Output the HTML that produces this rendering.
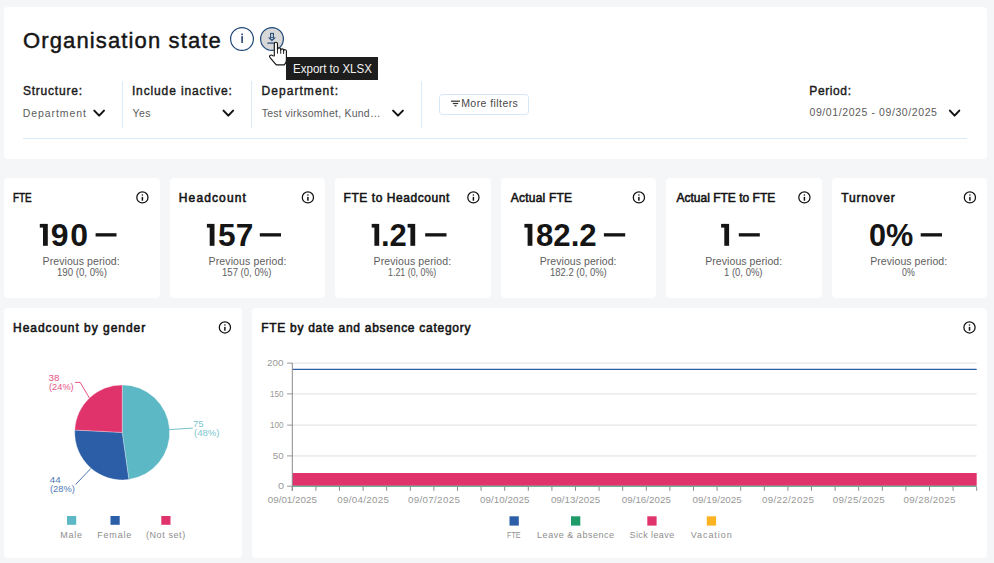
<!DOCTYPE html>
<html><head><meta charset="utf-8"><style>
*{margin:0;padding:0;box-sizing:border-box}
html,body{width:994px;height:563px;overflow:hidden;background:#f5f6f8;font-family:"Liberation Sans",sans-serif}
.card{position:absolute;background:#fff}
.t{position:absolute;white-space:nowrap}
svg{position:absolute;left:0;top:0}
</style></head><body>
<div class="card" style="left:4px;top:7px;width:983px;height:152px;border-radius:4px"></div><div class="card" style="left:4.0px;top:178px;width:155.5px;height:120px;border-radius:4px"></div><div class="card" style="left:169.5px;top:178px;width:155.5px;height:120px;border-radius:4px"></div><div class="card" style="left:335.0px;top:178px;width:155.5px;height:120px;border-radius:4px"></div><div class="card" style="left:500.5px;top:178px;width:155.5px;height:120px;border-radius:4px"></div><div class="card" style="left:666.0px;top:178px;width:155.5px;height:120px;border-radius:4px"></div><div class="card" style="left:831.5px;top:178px;width:155.5px;height:120px;border-radius:4px"></div><div class="card" style="left:4px;top:308px;width:238px;height:249.5px;border-radius:4px"></div><div class="card" style="left:252px;top:308px;width:735px;height:249.5px;border-radius:4px"></div>
<svg width="994" height="563" viewBox="0 0 994 563">
<line x1="122.5" y1="81" x2="122.5" y2="128" stroke="#d9eaf8" stroke-width="1"/><line x1="251.5" y1="81" x2="251.5" y2="128" stroke="#d9eaf8" stroke-width="1"/><line x1="421.5" y1="81" x2="421.5" y2="128" stroke="#d9eaf8" stroke-width="1"/><line x1="23" y1="138.5" x2="967" y2="138.5" stroke="#d9eaf8" stroke-width="1"/><polyline points="94.3,110.6 99.15,115.6 104,110.6" fill="none" stroke="#121212" stroke-width="2" stroke-linecap="round" stroke-linejoin="round"/><polyline points="223.5,110.6 228.3,115.6 233.1,110.6" fill="none" stroke="#121212" stroke-width="2" stroke-linecap="round" stroke-linejoin="round"/><polyline points="393.1,110.6 398.0,115.6 402.9,110.6" fill="none" stroke="#121212" stroke-width="2" stroke-linecap="round" stroke-linejoin="round"/><polyline points="949.9,110.6 954.5999999999999,115.6 959.3,110.6" fill="none" stroke="#121212" stroke-width="2" stroke-linecap="round" stroke-linejoin="round"/><rect x="439.5" y="94.5" width="89" height="20" rx="3" fill="#fff" stroke="#d5e7f6" stroke-width="1"/><rect x="451" y="100.6" width="9" height="1.2" fill="#333"/><rect x="452.8" y="102.9" width="5.4" height="1.2" fill="#333"/><rect x="454.5" y="105.2" width="2" height="1.2" fill="#333"/><circle cx="242" cy="39" r="11.4" fill="#fff" stroke="#1f4878" stroke-width="1.2"/><rect x="241.35" y="36.1" width="1.5" height="6.9" fill="#1a3a66"/><rect x="241.35" y="33.5" width="1.5" height="1.7" fill="#1a3a66"/><circle cx="272" cy="39" r="11.4" fill="#d8d8d8" stroke="#1f4878" stroke-width="1.2"/><rect x="270.6" y="33.4" width="2.8" height="4.6" fill="none" stroke="#1f4878" stroke-width="1.05"/><path d="M267.9 37.5 H276 L271.95 41.2 Z" fill="#1f4878"/><path d="M270.3 38.1 H273.7 L272 39.6 Z" fill="#d8d8d8"/><rect x="267.4" y="42.5" width="8" height="1.2" fill="#1f4878"/><rect x="286" y="57" width="92" height="23" fill="#1d1d1d"/><path d="M274.3,56 V43.9 a1.6,1.6 0 0 1 3.2,0 V49.4 a1.6,1.6 0 0 1 3.2,0.1 V50.2 a1.45,1.45 0 0 1 2.9,0.1 V51 a1.4,1.4 0 0 1 2.8,0.2 V60.3 q0,2.6 -2.1,4.6 H276.6 q-1.1,-0.6 -2.3,-2.2 l-4.4,-5.4 q-0.9,-1.4 0.5,-2.1 q1.3,-0.5 2.3,0.5 z" fill="#fff" stroke="#161616" stroke-width="1.15" stroke-linejoin="round"/><line x1="277.5" y1="49.4" x2="277.5" y2="53.6" stroke="#161616" stroke-width="0.9"/><line x1="280.7" y1="50.2" x2="280.7" y2="53.8" stroke="#161616" stroke-width="0.9"/><line x1="283.6" y1="51" x2="283.6" y2="54" stroke="#161616" stroke-width="0.9"/><circle cx="142.4" cy="197.4" r="5.6" fill="none" stroke="#111" stroke-width="1.25"/><rect x="141.65" y="196.9" width="1.5" height="3.8" fill="#111"/><circle cx="142.4" cy="195.05" r="0.8" fill="#111"/><rect x="95.6" y="233.2" width="20.900000000000006" height="3.3" fill="#151515"/><circle cx="307.9" cy="197.4" r="5.6" fill="none" stroke="#111" stroke-width="1.25"/><rect x="307.15" y="196.9" width="1.5" height="3.8" fill="#111"/><circle cx="307.9" cy="195.05" r="0.8" fill="#111"/><rect x="259.8" y="233.2" width="21.19999999999999" height="3.3" fill="#151515"/><circle cx="473.4" cy="197.4" r="5.6" fill="none" stroke="#111" stroke-width="1.25"/><rect x="472.65" y="196.9" width="1.5" height="3.8" fill="#111"/><circle cx="473.4" cy="195.05" r="0.8" fill="#111"/><rect x="425.2" y="233.2" width="21.30000000000001" height="3.3" fill="#151515"/><circle cx="638.9" cy="197.4" r="5.6" fill="none" stroke="#111" stroke-width="1.25"/><rect x="638.15" y="196.9" width="1.5" height="3.8" fill="#111"/><circle cx="638.9" cy="195.05" r="0.8" fill="#111"/><rect x="603.9" y="233.2" width="21.300000000000068" height="3.3" fill="#151515"/><circle cx="804.4" cy="197.4" r="5.6" fill="none" stroke="#111" stroke-width="1.25"/><rect x="803.65" y="196.9" width="1.5" height="3.8" fill="#111"/><circle cx="804.4" cy="195.05" r="0.8" fill="#111"/><rect x="738.8" y="233.2" width="21.0" height="3.3" fill="#151515"/><circle cx="969.9" cy="197.4" r="5.6" fill="none" stroke="#111" stroke-width="1.25"/><rect x="969.15" y="196.9" width="1.5" height="3.8" fill="#111"/><circle cx="969.9" cy="195.05" r="0.8" fill="#111"/><rect x="920.7" y="233.2" width="21.299999999999955" height="3.3" fill="#151515"/><rect x="39.8" y="223.9" width="4.200000000000003" height="3.7" fill="#151515"/><rect x="43.0" y="223.9" width="4.8" height="21.9" fill="#151515"/><rect x="206.9" y="223.9" width="3.799999999999983" height="3.7" fill="#151515"/><rect x="209.7" y="223.9" width="4.8" height="21.9" fill="#151515"/><rect x="371.7" y="223.9" width="3.6999999999999886" height="3.7" fill="#151515"/><rect x="374.4" y="223.9" width="4.8" height="21.9" fill="#151515"/><rect x="407.6" y="223.9" width="3.7999999999999545" height="3.7" fill="#151515"/><rect x="410.4" y="223.9" width="4.8" height="21.9" fill="#151515"/><rect x="524.4" y="223.9" width="4.2000000000000455" height="3.7" fill="#151515"/><rect x="527.6" y="223.9" width="4.8" height="21.9" fill="#151515"/><rect x="721.1" y="223.9" width="4.199999999999932" height="3.7" fill="#151515"/><rect x="724.3" y="223.9" width="4.8" height="21.9" fill="#151515"/><circle cx="224.9" cy="327.4" r="5.6" fill="none" stroke="#111" stroke-width="1.25"/><rect x="224.15" y="326.9" width="1.5" height="3.8" fill="#111"/><circle cx="224.9" cy="325.04999999999995" r="0.8" fill="#111"/><circle cx="969.5" cy="327.4" r="5.6" fill="none" stroke="#111" stroke-width="1.25"/><rect x="968.75" y="326.9" width="1.5" height="3.8" fill="#111"/><circle cx="969.5" cy="325.04999999999995" r="0.8" fill="#111"/><path d="M122.2,432.4 L122.20,384.90 A47.5,47.5 0 0 1 128.83,479.43 Z" fill="#5bb8c4" stroke="#fff" stroke-width="0.3" stroke-linejoin="round"/><path d="M122.2,432.4 L128.83,479.43 A47.5,47.5 0 0 1 74.76,430.02 Z" fill="#2b5ea6" stroke="#fff" stroke-width="0.3" stroke-linejoin="round"/><path d="M122.2,432.4 L74.76,430.02 A47.5,47.5 0 0 1 122.20,384.90 Z" fill="#e0336c" stroke="#fff" stroke-width="0.3" stroke-linejoin="round"/><polyline points="75.1,382.4 80.2,382.4 89.3,397.9" fill="none" stroke="#e0336c" stroke-width="0.85"/><polyline points="169.5,429.6 192.8,428.1" fill="none" stroke="#5bb8c4" stroke-width="0.85"/><polyline points="90.9,468.4 75.6,484.5" fill="none" stroke="#2b5ea6" stroke-width="0.85"/><rect x="67" y="516" width="9.2" height="8.8" fill="#5bb8c4"/><rect x="110.5" y="516" width="9.2" height="8.8" fill="#2b5ea6"/><rect x="161.3" y="516" width="9.2" height="8.8" fill="#e0336c"/><line x1="292.3" y1="363.1" x2="976.7" y2="363.1" stroke="#e6e6e6" stroke-width="1.3"/><line x1="287.1" y1="363.1" x2="292.3" y2="363.1" stroke="#999" stroke-width="1"/><line x1="292.3" y1="393.9" x2="976.7" y2="393.9" stroke="#e6e6e6" stroke-width="1.3"/><line x1="287.1" y1="393.9" x2="292.3" y2="393.9" stroke="#999" stroke-width="1"/><line x1="292.3" y1="425.1" x2="976.7" y2="425.1" stroke="#e6e6e6" stroke-width="1.3"/><line x1="287.1" y1="425.1" x2="292.3" y2="425.1" stroke="#999" stroke-width="1"/><line x1="292.3" y1="455.9" x2="976.7" y2="455.9" stroke="#e6e6e6" stroke-width="1.3"/><line x1="287.1" y1="455.9" x2="292.3" y2="455.9" stroke="#999" stroke-width="1"/><line x1="287.1" y1="486.2" x2="292.3" y2="486.2" stroke="#999" stroke-width="1"/><rect x="292.3" y="473" width="684.4000000000001" height="12.8" fill="#e0336c"/><line x1="292.3" y1="486.2" x2="976.7" y2="486.2" stroke="#3d9a78" stroke-width="1.1"/><line x1="292.3" y1="369.4" x2="976.7" y2="369.4" stroke="#2f5fa6" stroke-width="1.3"/><line x1="292.3" y1="363" x2="292.3" y2="491" stroke="#8a8a8a" stroke-width="1"/><line x1="292.30" y1="486.8" x2="292.30" y2="490.8" stroke="#8a8a8a" stroke-width="1"/><line x1="315.90" y1="486.8" x2="315.90" y2="490.8" stroke="#8a8a8a" stroke-width="1"/><line x1="339.50" y1="486.8" x2="339.50" y2="490.8" stroke="#8a8a8a" stroke-width="1"/><line x1="363.10" y1="486.8" x2="363.10" y2="490.8" stroke="#8a8a8a" stroke-width="1"/><line x1="386.70" y1="486.8" x2="386.70" y2="490.8" stroke="#8a8a8a" stroke-width="1"/><line x1="410.30" y1="486.8" x2="410.30" y2="490.8" stroke="#8a8a8a" stroke-width="1"/><line x1="433.90" y1="486.8" x2="433.90" y2="490.8" stroke="#8a8a8a" stroke-width="1"/><line x1="457.50" y1="486.8" x2="457.50" y2="490.8" stroke="#8a8a8a" stroke-width="1"/><line x1="481.10" y1="486.8" x2="481.10" y2="490.8" stroke="#8a8a8a" stroke-width="1"/><line x1="504.70" y1="486.8" x2="504.70" y2="490.8" stroke="#8a8a8a" stroke-width="1"/><line x1="528.30" y1="486.8" x2="528.30" y2="490.8" stroke="#8a8a8a" stroke-width="1"/><line x1="551.90" y1="486.8" x2="551.90" y2="490.8" stroke="#8a8a8a" stroke-width="1"/><line x1="575.50" y1="486.8" x2="575.50" y2="490.8" stroke="#8a8a8a" stroke-width="1"/><line x1="599.10" y1="486.8" x2="599.10" y2="490.8" stroke="#8a8a8a" stroke-width="1"/><line x1="622.70" y1="486.8" x2="622.70" y2="490.8" stroke="#8a8a8a" stroke-width="1"/><line x1="646.30" y1="486.8" x2="646.30" y2="490.8" stroke="#8a8a8a" stroke-width="1"/><line x1="669.90" y1="486.8" x2="669.90" y2="490.8" stroke="#8a8a8a" stroke-width="1"/><line x1="693.50" y1="486.8" x2="693.50" y2="490.8" stroke="#8a8a8a" stroke-width="1"/><line x1="717.10" y1="486.8" x2="717.10" y2="490.8" stroke="#8a8a8a" stroke-width="1"/><line x1="740.70" y1="486.8" x2="740.70" y2="490.8" stroke="#8a8a8a" stroke-width="1"/><line x1="764.30" y1="486.8" x2="764.30" y2="490.8" stroke="#8a8a8a" stroke-width="1"/><line x1="787.90" y1="486.8" x2="787.90" y2="490.8" stroke="#8a8a8a" stroke-width="1"/><line x1="811.50" y1="486.8" x2="811.50" y2="490.8" stroke="#8a8a8a" stroke-width="1"/><line x1="835.10" y1="486.8" x2="835.10" y2="490.8" stroke="#8a8a8a" stroke-width="1"/><line x1="858.70" y1="486.8" x2="858.70" y2="490.8" stroke="#8a8a8a" stroke-width="1"/><line x1="882.30" y1="486.8" x2="882.30" y2="490.8" stroke="#8a8a8a" stroke-width="1"/><line x1="905.90" y1="486.8" x2="905.90" y2="490.8" stroke="#8a8a8a" stroke-width="1"/><line x1="929.50" y1="486.8" x2="929.50" y2="490.8" stroke="#8a8a8a" stroke-width="1"/><line x1="953.10" y1="486.8" x2="953.10" y2="490.8" stroke="#8a8a8a" stroke-width="1"/><line x1="976.70" y1="486.8" x2="976.70" y2="490.8" stroke="#8a8a8a" stroke-width="1"/><rect x="509.5" y="516.3" width="9.3" height="9.3" fill="#2b5ea6"/><rect x="571" y="516.3" width="9.3" height="9.3" fill="#1f9a68"/><rect x="647.3" y="516.3" width="9.3" height="9.3" fill="#e0336c"/><rect x="706.8" y="516.3" width="9.3" height="9.3" fill="#fbb321"/>
</svg>
<div class="t" style="left:22.93px;top:30.04px;font-size:22px;line-height:22px;font-weight:400;color:#151515;letter-spacing:1.139px;-webkit-text-stroke:0.45px #151515;">Organisation state</div><div class="t" style="left:22.89px;top:85.21px;font-size:12px;line-height:12px;font-weight:400;color:#1a1a1a;letter-spacing:0.796px;-webkit-text-stroke:0.4px #1a1a1a;">Structure:</div><div class="t" style="left:131.89px;top:85.21px;font-size:12px;line-height:12px;font-weight:400;color:#1a1a1a;letter-spacing:0.873px;-webkit-text-stroke:0.4px #1a1a1a;">Include inactive:</div><div class="t" style="left:261.47px;top:85.21px;font-size:12px;line-height:12px;font-weight:400;color:#1a1a1a;letter-spacing:1.058px;-webkit-text-stroke:0.4px #1a1a1a;">Department:</div><div class="t" style="left:809.27px;top:85.21px;font-size:12px;line-height:12px;font-weight:400;color:#1a1a1a;letter-spacing:0.614px;-webkit-text-stroke:0.4px #1a1a1a;">Period:</div><div class="t" style="left:22.69px;top:108.27px;font-size:10.5px;line-height:10.5px;font-weight:400;color:#5c5c5c;letter-spacing:0.926px;">Department</div><div class="t" style="left:132.43px;top:108.27px;font-size:10.5px;line-height:10.5px;font-weight:400;color:#5c5c5c;letter-spacing:0.489px;">Yes</div><div class="t" style="left:261.74px;top:108.27px;font-size:10.5px;line-height:10.5px;font-weight:400;color:#5c5c5c;letter-spacing:0.231px;">Test virksomhet, Kund…</div><div class="t" style="left:809.49px;top:107.17px;font-size:10.5px;line-height:10.5px;font-weight:400;color:#5c5c5c;letter-spacing:0.590px;">09/01/2025 - 09/30/2025</div><div class="t" style="left:461.19px;top:98.27px;font-size:10.5px;line-height:10.5px;font-weight:400;color:#484848;letter-spacing:0.429px;">More filters</div><div class="t" style="left:292.65px;top:62.91px;font-size:12px;line-height:12px;font-weight:400;color:#f2f2f2;letter-spacing:0.000px;transform:scaleX(0.9614);transform-origin:0 0;">Export to XLSX</div><div class="t" style="left:13.44px;top:192.21px;font-size:12px;line-height:12px;font-weight:400;color:#141414;letter-spacing:0.000px;transform:scaleX(0.8239);transform-origin:0 0;-webkit-text-stroke:0.55px #141414;">FTE</div><div class="t" style="left:178.83px;top:192.21px;font-size:12px;line-height:12px;font-weight:400;color:#141414;letter-spacing:1.119px;-webkit-text-stroke:0.55px #141414;">Headcount</div><div class="t" style="left:343.53px;top:192.21px;font-size:12px;line-height:12px;font-weight:400;color:#141414;letter-spacing:0.557px;-webkit-text-stroke:0.55px #141414;">FTE to Headcount</div><div class="t" style="left:510.87px;top:192.21px;font-size:12px;line-height:12px;font-weight:400;color:#141414;letter-spacing:0.201px;-webkit-text-stroke:0.55px #141414;">Actual FTE</div><div class="t" style="left:676.47px;top:192.21px;font-size:12px;line-height:12px;font-weight:400;color:#141414;letter-spacing:0.005px;-webkit-text-stroke:0.55px #141414;">Actual FTE to FTE</div><div class="t" style="left:841.18px;top:192.21px;font-size:12px;line-height:12px;font-weight:400;color:#141414;letter-spacing:0.860px;-webkit-text-stroke:0.55px #141414;">Turnover</div><div class="t" style="left:50.78px;top:219.00px;font-size:32px;line-height:32px;font-weight:700;color:#151515;letter-spacing:1.598px;">90</div><div class="t" style="left:217.65px;top:219.00px;font-size:32px;line-height:32px;font-weight:700;color:#151515;letter-spacing:0.000px;transform:scaleX(0.9905);transform-origin:0 0;">57</div><div class="t" style="left:381.03px;top:219.00px;font-size:32px;line-height:32px;font-weight:700;color:#151515;letter-spacing:0.000px;transform:scaleX(0.9674);transform-origin:0 0;">.2</div><div class="t" style="left:535.61px;top:219.00px;font-size:32px;line-height:32px;font-weight:700;color:#151515;letter-spacing:0.000px;transform:scaleX(0.9740);transform-origin:0 0;">82.2</div><div class="t" style="left:868.83px;top:219.00px;font-size:32px;line-height:32px;font-weight:700;color:#151515;letter-spacing:0.000px;transform:scaleX(0.9570);transform-origin:0 0;">0%</div><div class="t" style="left:42.59px;top:256.47px;font-size:10.5px;line-height:10.5px;font-weight:400;color:#5e5e5e;letter-spacing:0.084px;">Previous period:</div><div class="t" style="left:208.59px;top:256.47px;font-size:10.5px;line-height:10.5px;font-weight:400;color:#5e5e5e;letter-spacing:0.124px;">Previous period:</div><div class="t" style="left:373.59px;top:256.47px;font-size:10.5px;line-height:10.5px;font-weight:400;color:#5e5e5e;letter-spacing:0.111px;">Previous period:</div><div class="t" style="left:539.69px;top:256.47px;font-size:10.5px;line-height:10.5px;font-weight:400;color:#5e5e5e;letter-spacing:0.064px;">Previous period:</div><div class="t" style="left:705.19px;top:256.47px;font-size:10.5px;line-height:10.5px;font-weight:400;color:#5e5e5e;letter-spacing:0.071px;">Previous period:</div><div class="t" style="left:870.19px;top:256.47px;font-size:10.5px;line-height:10.5px;font-weight:400;color:#5e5e5e;letter-spacing:0.071px;">Previous period:</div><div class="t" style="left:56.53px;top:267.07px;font-size:10.5px;line-height:10.5px;font-weight:400;color:#5e5e5e;letter-spacing:0.000px;transform:scaleX(0.9194);transform-origin:0 0;">190 (0, 0%)</div><div class="t" style="left:222.34px;top:267.07px;font-size:10.5px;line-height:10.5px;font-weight:400;color:#5e5e5e;letter-spacing:0.000px;transform:scaleX(0.9100);transform-origin:0 0;">157 (0, 0%)</div><div class="t" style="left:387.60px;top:267.07px;font-size:10.5px;line-height:10.5px;font-weight:400;color:#5e5e5e;letter-spacing:0.000px;transform:scaleX(0.8431);transform-origin:0 0;">1.21 (0, 0%)</div><div class="t" style="left:549.55px;top:267.07px;font-size:10.5px;line-height:10.5px;font-weight:400;color:#5e5e5e;letter-spacing:0.000px;transform:scaleX(0.9001);transform-origin:0 0;">182.2 (0, 0%)</div><div class="t" style="left:723.84px;top:267.07px;font-size:10.5px;line-height:10.5px;font-weight:400;color:#5e5e5e;letter-spacing:0.000px;transform:scaleX(0.9045);transform-origin:0 0;">1 (0, 0%)</div><div class="t" style="left:902.47px;top:267.07px;font-size:10.5px;line-height:10.5px;font-weight:400;color:#5e5e5e;letter-spacing:0.000px;transform:scaleX(0.8446);transform-origin:0 0;">0%</div><div class="t" style="left:13.03px;top:322.21px;font-size:12px;line-height:12px;font-weight:400;color:#141414;letter-spacing:0.968px;-webkit-text-stroke:0.55px #141414;">Headcount by gender</div><div class="t" style="left:261.13px;top:322.21px;font-size:12px;line-height:12px;font-weight:400;color:#141414;letter-spacing:0.727px;-webkit-text-stroke:0.55px #141414;">FTE by date and absence category</div><div class="t" style="left:267.00px;top:358.33px;font-size:9.8px;line-height:9.8px;font-weight:400;color:#999999;letter-spacing:0.062px;">200</div><div class="t" style="left:269.94px;top:389.13px;font-size:9.8px;line-height:9.8px;font-weight:400;color:#999999;letter-spacing:0.000px;transform:scaleX(0.8261);transform-origin:0 0;">150</div><div class="t" style="left:269.94px;top:420.33px;font-size:9.8px;line-height:9.8px;font-weight:400;color:#999999;letter-spacing:0.000px;transform:scaleX(0.8261);transform-origin:0 0;">100</div><div class="t" style="left:272.64px;top:451.13px;font-size:9.8px;line-height:9.8px;font-weight:400;color:#999999;letter-spacing:0.145px;">50</div><div class="t" style="left:277.53px;top:481.43px;font-size:9.8px;line-height:9.8px;font-weight:400;color:#999999;letter-spacing:0.000px;transform:scaleX(1.1143);transform-origin:0 0;">0</div><div class="t" style="left:267.69px;top:495.03px;font-size:9.8px;line-height:9.8px;font-weight:400;color:#999999;letter-spacing:0.026px;">09/01/2025</div><div class="t" style="left:337.19px;top:495.03px;font-size:9.8px;line-height:9.8px;font-weight:400;color:#999999;letter-spacing:0.315px;">09/04/2025</div><div class="t" style="left:407.99px;top:495.03px;font-size:9.8px;line-height:9.8px;font-weight:400;color:#999999;letter-spacing:0.315px;">09/07/2025</div><div class="t" style="left:480.09px;top:495.03px;font-size:9.8px;line-height:9.8px;font-weight:400;color:#999999;letter-spacing:0.026px;">09/10/2025</div><div class="t" style="left:550.89px;top:495.03px;font-size:9.8px;line-height:9.8px;font-weight:400;color:#999999;letter-spacing:0.026px;">09/13/2025</div><div class="t" style="left:621.69px;top:495.03px;font-size:9.8px;line-height:9.8px;font-weight:400;color:#999999;letter-spacing:0.026px;">09/16/2025</div><div class="t" style="left:692.49px;top:495.03px;font-size:9.8px;line-height:9.8px;font-weight:400;color:#999999;letter-spacing:0.026px;">09/19/2025</div><div class="t" style="left:761.99px;top:495.03px;font-size:9.8px;line-height:9.8px;font-weight:400;color:#999999;letter-spacing:0.315px;">09/22/2025</div><div class="t" style="left:832.79px;top:495.03px;font-size:9.8px;line-height:9.8px;font-weight:400;color:#999999;letter-spacing:0.315px;">09/25/2025</div><div class="t" style="left:903.59px;top:495.03px;font-size:9.8px;line-height:9.8px;font-weight:400;color:#999999;letter-spacing:0.315px;">09/28/2025</div><div class="t" style="left:48.49px;top:373.13px;font-size:9.8px;line-height:9.8px;font-weight:400;color:#e55587;letter-spacing:0.145px;">38</div><div class="t" style="left:48.97px;top:382.03px;font-size:9.8px;line-height:9.8px;font-weight:400;color:#e55587;letter-spacing:0.000px;transform:scaleX(0.9447);transform-origin:0 0;">(24%)</div><div class="t" style="left:193.36px;top:418.93px;font-size:9.8px;line-height:9.8px;font-weight:400;color:#7cc6cf;letter-spacing:0.000px;transform:scaleX(0.9780);transform-origin:0 0;">75</div><div class="t" style="left:193.65px;top:427.93px;font-size:9.8px;line-height:9.8px;font-weight:400;color:#7cc6cf;letter-spacing:0.000px;transform:scaleX(0.9730);transform-origin:0 0;">(48%)</div><div class="t" style="left:49.80px;top:474.93px;font-size:9.8px;line-height:9.8px;font-weight:400;color:#5078b5;letter-spacing:0.018px;">44</div><div class="t" style="left:49.77px;top:483.93px;font-size:9.8px;line-height:9.8px;font-weight:400;color:#5078b5;letter-spacing:0.000px;transform:scaleX(0.9488);transform-origin:0 0;">(28%)</div><div class="t" style="left:60.17px;top:531.34px;font-size:9px;line-height:9px;font-weight:400;color:#8e8e8e;letter-spacing:0.788px;">Male</div><div class="t" style="left:97.27px;top:531.34px;font-size:9px;line-height:9px;font-weight:400;color:#8e8e8e;letter-spacing:0.796px;">Female</div><div class="t" style="left:145.96px;top:531.34px;font-size:9px;line-height:9px;font-weight:400;color:#8e8e8e;letter-spacing:0.587px;">(Not set)</div><div class="t" style="left:507.01px;top:531.34px;font-size:9px;line-height:9px;font-weight:400;color:#8e8e8e;letter-spacing:0.000px;transform:scaleX(0.7993);transform-origin:0 0;">FTE</div><div class="t" style="left:537.07px;top:531.34px;font-size:9px;line-height:9px;font-weight:400;color:#8e8e8e;letter-spacing:0.533px;">Leave &amp; absence</div><div class="t" style="left:629.57px;top:531.34px;font-size:9px;line-height:9px;font-weight:400;color:#8e8e8e;letter-spacing:0.397px;">Sick leave</div><div class="t" style="left:690.79px;top:531.34px;font-size:9px;line-height:9px;font-weight:400;color:#8e8e8e;letter-spacing:0.930px;">Vacation</div>
</body></html>
